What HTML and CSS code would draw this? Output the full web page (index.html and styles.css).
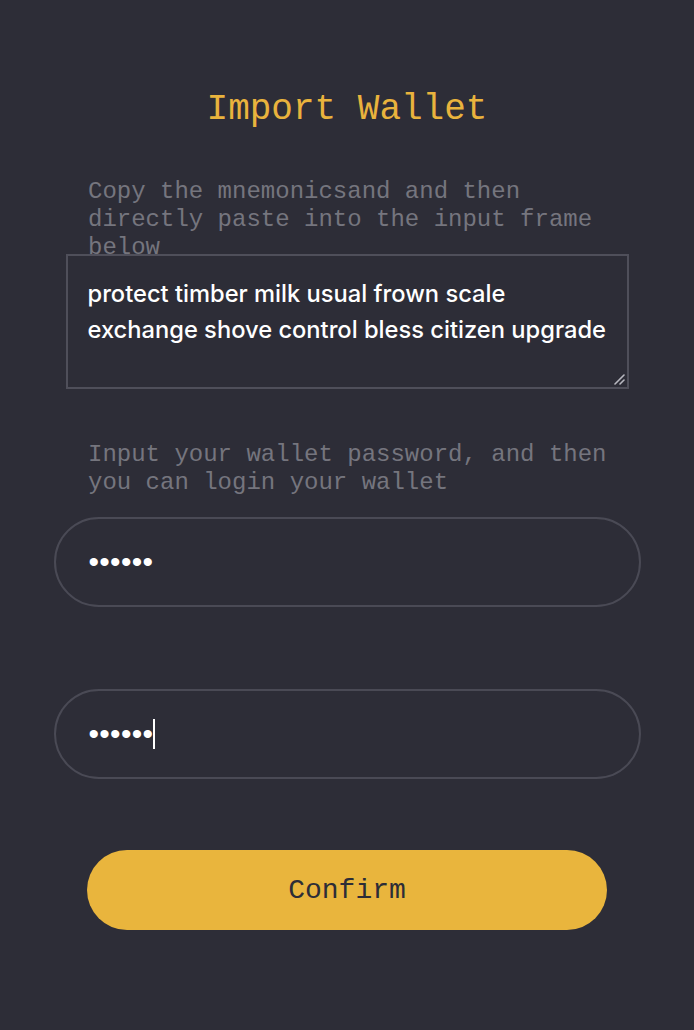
FILE: index.html
```html
<!DOCTYPE html>
<html lang="en">
<head>
<meta charset="utf-8">
<title>Import Wallet</title>
<link rel="stylesheet" href="styles.css">
</head>
<body>
<main class="page">
  <h1 class="title">Import Wallet</h1>
  <p class="hint hint-mnemonic">Copy the mnemonicsand and then directly paste into the input frame below</p>
  <div class="mnemonic">
    <div class="mnemonic-text">protect timber milk usual frown scale exchange shove control bless citizen upgrade</div>
    <svg class="resizer" width="12" height="12" viewBox="0 0 12 12" aria-hidden="true">
      <path d="M2 11 L11 2 M7 11 L11 7" stroke="#b8b8c0" stroke-width="1.6" stroke-linecap="round" fill="none"/>
    </svg>
  </div>
  <p class="hint hint-password">Input your wallet password, and then you can login your wallet</p>
  <div class="field field-first"><span class="dots">••••••</span></div>
  <div class="field field-second"><span class="dots">••••••</span><span class="caret"></span></div>
  <button class="confirm" type="button">Confirm</button>
</main>
</body>
</html>
```

FILE: styles.css
```css
html, body {
  margin: 0;
  padding: 0;
  background: #2d2d37;
}

.page {
  width: 694px;
  min-height: 1030px;
  box-sizing: border-box;
  padding-top: 88px;
  display: flex;
  flex-direction: column;
  align-items: center;
}

.title {
  margin: 0;
  font-family: "Liberation Mono", "Courier New", monospace;
  font-weight: normal;
  font-size: 36px;
  line-height: 44px;
  color: #e9b33d;
  text-align: center;
}

.hint {
  margin: 0 0 0 14px;
  width: 532px;
  font-family: "Liberation Mono", "Courier New", monospace;
  font-size: 24px;
  line-height: 28px;
  color: #75757e;
}

.hint-mnemonic {
  margin-top: 46px;
  margin-bottom: -8px;
}

.mnemonic {
  position: relative;
  width: 563px;
  height: 135px;
  box-sizing: border-box;
  border: 2px solid #4f4f5a;
  padding: 20px 16px 0 20px;
}

.mnemonic-text {
  font-family: Inter, "Liberation Sans", Arial, sans-serif;
  font-weight: 500;
  font-size: 23.7px;
  line-height: 36px;
  color: #ffffff;
}

.resizer {
  position: absolute;
  right: 2px;
  bottom: 2px;
}

.hint-password {
  margin-top: 52px;
}

.field {
  width: 587px;
  height: 90px;
  box-sizing: border-box;
  border: 2px solid #4a4a55;
  border-radius: 45px;
  padding-left: 33px;
  display: flex;
  align-items: center;
}

.field-first {
  margin-top: 20px;
}

.field-second {
  margin-top: 82px;
}

.dots {
  font-family: "Liberation Sans", Arial, sans-serif;
  font-size: 30px;
  line-height: 30px;
  letter-spacing: 0.3px;
  color: #ffffff;
}

.caret {
  width: 2px;
  height: 30px;
  margin-left: 0;
  background: #ffffff;
}

.confirm {
  margin-top: 71px;
  width: 520px;
  height: 80px;
  border: none;
  border-radius: 40px;
  background: #e9b53d;
  font-family: "Liberation Mono", "Courier New", monospace;
  font-size: 28px;
  color: #2d2d37;
  padding: 0;
  cursor: pointer;
}
```
